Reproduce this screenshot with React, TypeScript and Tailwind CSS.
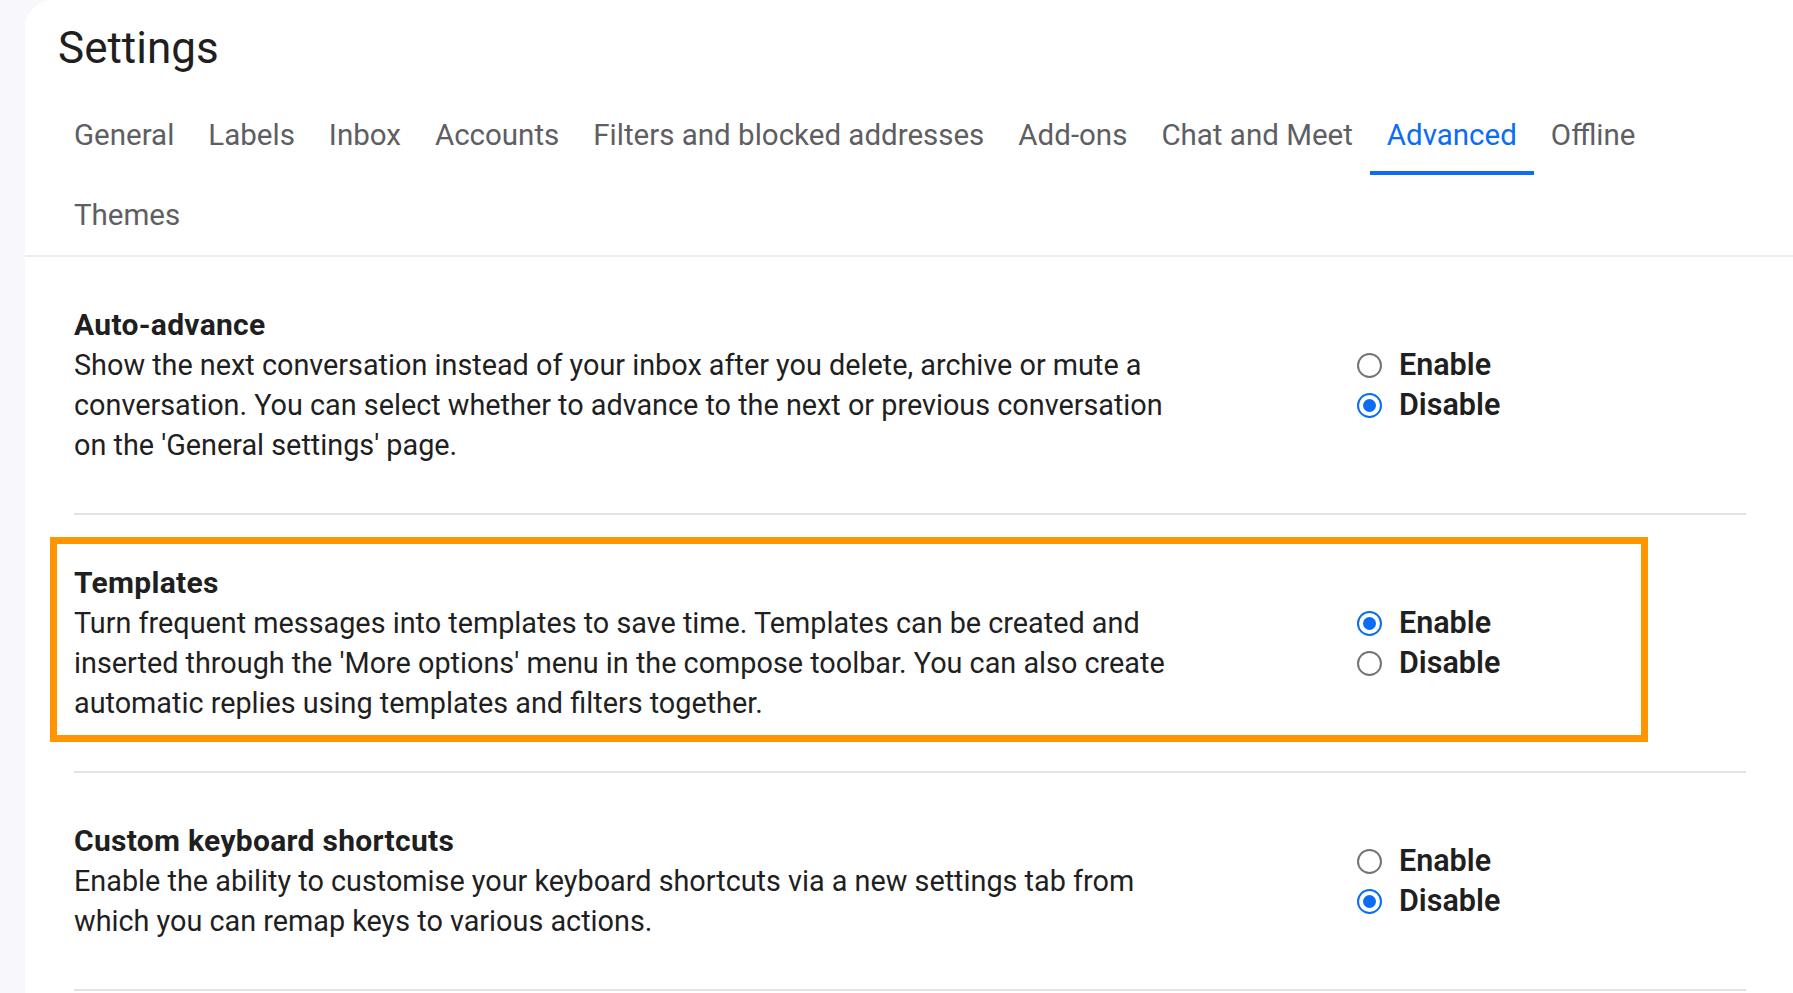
import React from "react"

const tabs = [
  "General",
  "Labels",
  "Inbox",
  "Accounts",
  "Filters and blocked addresses",
  "Add-ons",
  "Chat and Meet",
  "Advanced",
  "Offline",
  "Themes",
]

type Section = {
  title: string
  lines: string[]
  enabled: boolean
  highlight?: boolean
}

const sections: Section[] = [
  {
    title: "Auto-advance",
    lines: [
      "Show the next conversation instead of your inbox after you delete, archive or mute a",
      "conversation. You can select whether to advance to the next or previous conversation",
      "on the 'General settings' page.",
    ],
    enabled: false,
  },
  {
    title: "Templates",
    lines: [
      "Turn frequent messages into templates to save time. Templates can be created and",
      "inserted through the 'More options' menu in the compose toolbar. You can also create",
      "automatic replies using templates and filters together.",
    ],
    enabled: true,
    highlight: true,
  },
  {
    title: "Custom keyboard shortcuts",
    lines: [
      "Enable the ability to customise your keyboard shortcuts via a new settings tab from",
      "which you can remap keys to various actions.",
    ],
    enabled: false,
  },
]

function Radio({ checked, label }: { checked: boolean; label: string }) {
  return (
    <label className="flex h-[40px] items-center gap-[17px]">
      {checked ? (
        <span className="flex h-[25px] w-[25px] items-center justify-center rounded-full border-[2.5px] border-[#0b6cf5]">
          <span className="h-[13px] w-[13px] rounded-full bg-[#0b6cf5]" />
        </span>
      ) : (
        <span className="h-[25px] w-[25px] rounded-full border-2 border-[#747477]" />
      )}
      <span className="text-[30.5px] font-semibold text-[#1f1f1f]">{label}</span>
    </label>
  )
}

function SettingRow({ section }: { section: Section }) {
  return (
    <div className="relative">
      {section.highlight && (
        <div className="pointer-events-none absolute left-[-24px] top-[22px] bottom-[31px] w-[1598px] border-[7px] border-[#ff9500]" />
      )}
      <div className="flex items-center border-b-2 border-[#e3e3e6] py-[48px]">
        <div className="w-[1283px] text-[28.8px] leading-[40px] text-[#1f1f1f]">
          <div className="text-[30px] font-bold tracking-[0.3px]">{section.title}</div>
          {section.lines.map((line) => (
            <div key={line}>{line}</div>
          ))}
        </div>
        <div className="flex flex-col">
          <Radio checked={section.enabled} label="Enable" />
          <Radio checked={!section.enabled} label="Disable" />
        </div>
      </div>
    </div>
  )
}

export default function App() {
  return (
    <div className="flex min-h-screen bg-[#f8f8fc] font-['Roboto',sans-serif]">
      <div className="ml-[25px] flex-1 overflow-hidden rounded-tl-[28px] bg-white">
        <h1 className="flex h-[95px] items-center pl-[33px] text-[44px] text-[#1f1f1f]">Settings</h1>

        <div className="border-b-2 border-[#eceef1] pl-[32px]">
          <div className="flex w-[1700px] flex-wrap">
            {tabs.map((tab) => (
              <div
                key={tab}
                className={
                  tab === "Advanced"
                    ? "flex h-[80px] items-center border-b-[4px] border-[#0b6cf5] px-[17px] pt-[4px] text-[29.5px] text-[#0b6cf5]"
                    : "flex h-[80px] items-center px-[17px] text-[29.5px] text-[#5e5e63]"
                }
              >
                {tab}
              </div>
            ))}
          </div>
        </div>

        <div className="pl-[49px] pr-[47px]">
          {sections.map((s) => (
            <SettingRow key={s.title} section={s} />
          ))}
        </div>
      </div>
    </div>
  )
}
